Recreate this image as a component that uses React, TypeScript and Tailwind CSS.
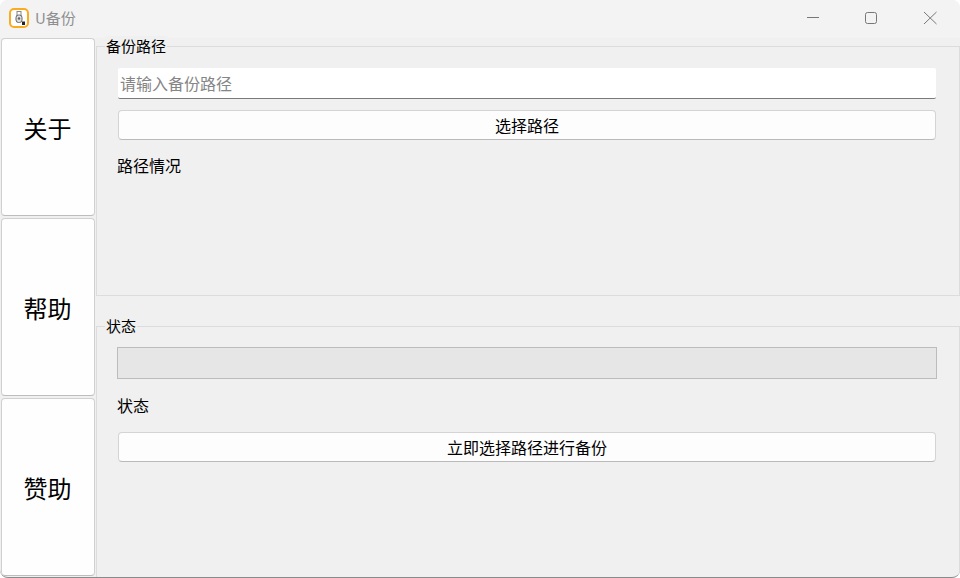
const font = { fontFamily: '"Noto Sans CJK SC", "Noto Sans", sans-serif' };

function SideButton({ label }: { label: string }) {
  return (
    <button className="h-[178px] w-[94px] shrink-0 rounded-[4px] border border-[#d0d0d0] border-b-[#bdbdbd] bg-[#fefefe] pt-[2px] pr-[1px] text-[24px] text-black">
      {label}
    </button>
  );
}

function WideButton({ label }: { label: string }) {
  return (
    <button className="h-[30px] w-[818px] rounded-[4px] border border-[#d4d4d4] border-b-[#bababa] bg-[#fdfdfd] text-[16px] leading-[28px] text-black">
      {label}
    </button>
  );
}

function GroupTitle({ label }: { label: string }) {
  return (
    <span className="absolute left-[8px] top-[-11px] bg-[#f0f0f0] px-[1px] text-[15px] leading-[20px] text-black">
      {label}
    </span>
  );
}

export default function App() {
  return (
    <div
      style={font}
      className="flex h-[578px] w-[960px] flex-col overflow-hidden rounded-[8px] border-b border-b-[#8a8a8a] bg-[#f0f0f0]"
    >
      {/* title bar */}
      <div className="flex h-[38px] shrink-0 items-center bg-[#f3f3f3] pb-[2px]">
        <div className="ml-[9px] flex h-[20px] w-[20px] items-center justify-center rounded-[5px] border-2 border-[#fbab1e] bg-white">
          <svg width="12" height="14" viewBox="0 0 12 14">
            <rect x="4" y="0.5" width="4" height="4" fill="#fff" stroke="#888" />
            <rect x="3" y="4" width="6" height="7.5" rx="2.5" fill="#ddd" stroke="#666" />
            <circle cx="6" cy="7.5" r="1.2" fill="#666" />
            <rect x="9" y="10.5" width="3" height="3.5" fill="#222" />
          </svg>
        </div>
        <span className="ml-[6px] text-[15px] text-[#8f8f8f]">U备份</span>
        <div className="ml-auto flex items-center">
          <svg width="59" height="36" viewBox="0 0 59 36">
            <path d="M24 17.5H36" stroke="#777" strokeWidth="1" />
          </svg>
          <svg width="59" height="36" viewBox="0 0 59 36">
            <rect x="23.5" y="12.5" width="11" height="11" rx="2" fill="none" stroke="#777" strokeWidth="1" />
          </svg>
          <svg width="59" height="36" viewBox="0 0 59 36">
            <path d="M23 12L35.5 24M35.5 12L23 24" stroke="#777" strokeWidth="1" />
          </svg>
        </div>
      </div>

      <div className="flex min-h-0 flex-1">
        {/* side buttons */}
        <div className="ml-[1px] flex w-[95px] shrink-0 flex-col gap-[2px]">
          <SideButton label="关于" />
          <SideButton label="帮助" />
          <SideButton label="赞助" />
        </div>

        <div className="flex flex-1 flex-col">
          {/* backup path group */}
          <section className="relative mt-[8px] h-[250px] border border-[#dcdcdc] pl-[21px] pt-[21px]">
            <GroupTitle label="备份路径" />
            <input
              placeholder="请输入备份路径"
              className="h-[31px] w-[818px] rounded-[2px] border-b border-b-[#7a7a7a] bg-white pl-[2px] text-[16px] text-black outline-none placeholder:text-[#858585]"
            />
            <div className="mt-[11px]">
              <WideButton label="选择路径" />
            </div>
            <p className="-ml-[1px] mt-[13px] text-[16px] leading-[24px] text-black">路径情况</p>
          </section>

          {/* status group */}
          <section className="relative mt-[30px] flex-1 border-l border-r border-t border-[#dcdcdc] pl-[21px] pt-[20px]">
            <GroupTitle label="状态" />
            <div className="-ml-[1px] h-[32px] w-[820px] border border-[#bcbcbc] bg-[#e6e6e6]" />
            <p className="-ml-[1px] mt-[14px] text-[16px] leading-[24px] text-black">状态</p>
            <div className="mt-[15px]">
              <WideButton label="立即选择路径进行备份" />
            </div>
          </section>
        </div>
      </div>
    </div>
  );
}
